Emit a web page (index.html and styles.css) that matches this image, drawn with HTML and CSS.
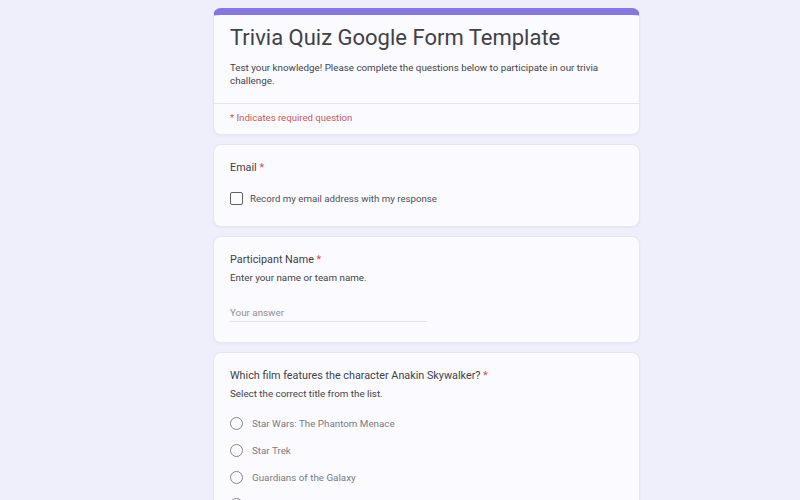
FILE: index.html
```html
<!DOCTYPE html>
<html lang="en">

<head>
    <meta charset="UTF-8">
    <meta name="viewport" content="width=device-width, initial-scale=1.0">
    <title>Trivia Quiz Google Form Template</title>
    <link rel="stylesheet" href="styles.css">
</head>

<body>
    <div class="form">
        <div class="card header">
            <div class="header-top">
                <h1>Trivia Quiz Google Form Template</h1>
                <p class="intro">Test your knowledge! Please complete the questions below to participate in our trivia challenge.</p>
            </div>
            <div class="required-note">* Indicates required question</div>
        </div>

        <div class="card">
            <div class="question">Email <span class="star">*</span></div>
            <label class="check-row">
                <span class="checkbox"></span>
                Record my email address with my response
            </label>
        </div>

        <div class="card">
            <div class="question">Participant Name <span class="star">*</span></div>
            <div class="hint">Enter your name or team name.</div>
            <div class="answer">Your answer</div>
        </div>

        <div class="card">
            <div class="question">Which film features the character Anakin Skywalker? <span class="star">*</span></div>
            <div class="hint">Select the correct title from the list.</div>
            <div class="options">
                <label class="option"><span class="radio"></span>Star Wars: The Phantom Menace</label>
                <label class="option"><span class="radio"></span>Star Trek</label>
                <label class="option"><span class="radio"></span>Guardians of the Galaxy</label>
                <label class="option"><span class="radio"></span>The Matrix</label>
            </div>
        </div>
    </div>
</body>

</html>
```

FILE: styles.css
```css
body {
    font-family: Roboto, 'Noto Sans', sans-serif;
    background-color: #efeefb;
    margin: 0;
    color: #3a3a3f;
}

.form {
    width: 427px;
    margin: 8px auto 0 213px;
    display: flex;
    flex-direction: column;
    gap: 9px;
}

.card {
    background-color: #fafaff;
    border: 1px solid #e6e5f2;
    border-radius: 8px;
    padding: 15px 16px 20px;
    box-shadow: 0 1px 2px rgba(60, 50, 120, 0.05);
}

.header {
    border-top: 7px solid #8577dc;
    padding: 0;
}

.header-top {
    padding: 8px 16px 16px;
    border-bottom: 1px solid #e6e5f2;
}

h1 {
    font-size: 22px;
    font-weight: 400;
    color: #414147;
    margin: 0 0 8px;
    line-height: 30px;
}

.intro {
    font-size: 9.8px;
    line-height: 13px;
    margin: 0;
    color: #44444a;
}

.required-note {
    font-size: 9.6px;
    color: #c85a5a;
    padding: 8px 16px 11px;
}

.question {
    font-size: 10.8px;
    color: #3f3f45;
    line-height: 15px;
}

.star {
    color: #d05050;
}

.check-row {
    display: flex;
    align-items: center;
    gap: 7px;
    font-size: 9.7px;
    color: #505056;
    margin: 17px 0 1px;
}

.checkbox {
    width: 11px;
    height: 11px;
    border: 1.5px solid #5f5f66;
    border-radius: 2px;
}

.hint {
    font-size: 9.8px;
    color: #44444a;
    margin-top: 5px;
}

.answer {
    width: 197px;
    font-size: 9.8px;
    color: #909097;
    margin-top: 24px;
    padding-bottom: 3px;
    border-bottom: 1px solid #e3e2ea;
}

.options {
    display: flex;
    flex-direction: column;
    gap: 14px;
    margin-top: 18px;
}

.option {
    display: flex;
    align-items: center;
    gap: 9px;
    font-size: 9.8px;
    color: #7b7b82;
}

.radio {
    width: 11px;
    height: 11px;
    border: 1.5px solid #85858c;
    border-radius: 50%;
}
```
